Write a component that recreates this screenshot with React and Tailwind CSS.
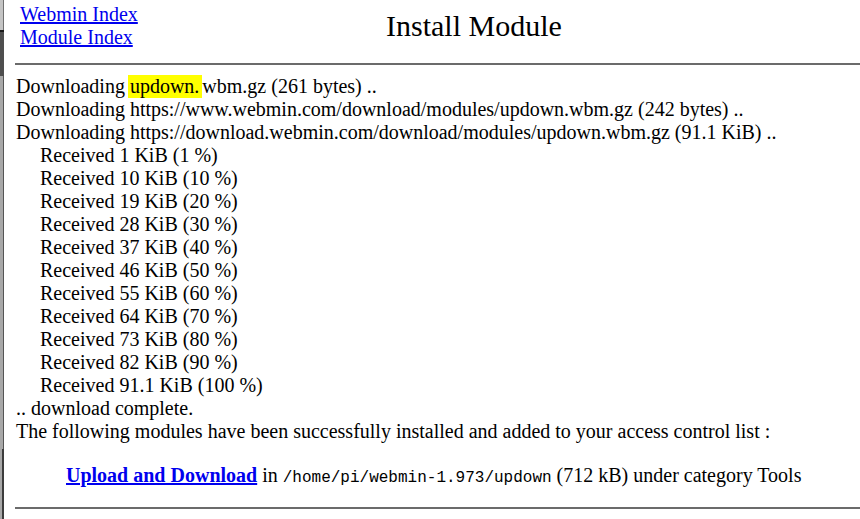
import React from 'react';

const received = [
  ['1', '1'],
  ['10', '10'],
  ['19', '20'],
  ['28', '30'],
  ['37', '40'],
  ['46', '50'],
  ['55', '60'],
  ['64', '70'],
  ['73', '80'],
  ['82', '90'],
  ['91.1', '100'],
];

const WindowEdge = () => (
  <div className="w-[4px] shrink-0 flex flex-col">
    <div className="h-[30px] bg-[#c4c4c4] border-r border-[#707070]" />
    <div className="h-[2px] bg-[#1a1a1a]" />
    <div className="h-[44px] bg-[#4e4e4e]" />
    <div className="flex-1 bg-[#a8a8a8] border-r border-[#555555]" />
    <div className="h-[70px] bg-[#a8a8a8] border-r-2 border-[#3c3c3c]" />
  </div>
);

export default function App() {
  return (
    <div className="w-[860px] h-[519px] overflow-hidden bg-white flex font-['Liberation_Serif','Times_New_Roman',serif] text-black text-[20px] leading-[23px]">
      <WindowEdge />

      <div className="flex-1 min-w-0 pl-[11px] pt-[3px]">
        {/* header */}
        <div className="flex items-center pl-[5px]">
          <div className="w-[366px] shrink-0 flex flex-col">
            <a href="#" className="text-[#0000ee] underline self-start">Webmin Index</a>
            <a href="#" className="text-[#0000ee] underline self-start">Module Index</a>
          </div>
          <h1 className="text-[30px] leading-[34px] font-normal">Install Module</h1>
        </div>

        <div className="mt-[14px] h-[2px] bg-[#6b6b6b]" />

        <div className="mt-[10px] pl-[1px]">
          <div>
            Downloading{' '}
            <span className="inline-block align-top h-[23px] bg-[#ffff00] -ml-[2px] pl-[2px] pr-[3px]">updown.</span>
            wbm.gz (261 bytes) ..
          </div>
          <div>Downloading https://www.webmin.com/download/modules/updown.wbm.gz (242 bytes) ..</div>
          <div>Downloading https://download.webmin.com/download/modules/updown.wbm.gz (91.1 KiB) ..</div>
          <div className="pl-[24px]">
            {received.map(([kb, pct]) => (
              <div key={pct}>Received {kb} KiB ({pct} %)</div>
            ))}
          </div>
          <div>.. download complete.</div>
          <div className="whitespace-nowrap">
            The following modules have been successfully installed and added to your access control list :
          </div>

          <div className="mt-[21px] pl-[50px] whitespace-nowrap h-[23px]">
            <a href="#" className="text-[#0000ee] underline font-bold">Upload and Download</a> in{' '}
            <span className="font-['Liberation_Mono','Courier_New',monospace] text-[16px] leading-[16px]">/home/pi/webmin-1.973/updown</span>{' '}
            (712 kB) under category Tools
          </div>
        </div>

        <div className="mt-[20px] h-[2px] bg-[#6b6b6b]" />
      </div>
    </div>
  );
}
